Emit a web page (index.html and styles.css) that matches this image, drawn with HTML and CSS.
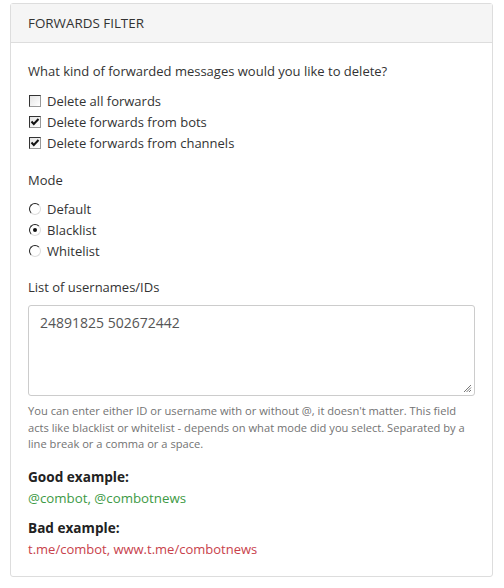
FILE: index.html
```html
<!DOCTYPE html>
<html>
<head>
<meta charset="utf-8">
<link rel="stylesheet" href="styles.css">
</head>
<body>
<div class="panel">
  <div class="panel-heading">FORWARDS FILTER</div>
  <div class="panel-body">
    <div class="question">What kind of forwarded messages would you like to delete?</div>
    <div class="options">
      <label class="opt"><span class="cb"></span>Delete all forwards</label>
      <label class="opt"><span class="cb checked"><svg viewBox="0 0 12 12" width="12" height="12"><path d="M2.5 5.5 L4.8 8 L9.5 3" fill="none" stroke="#111" stroke-width="2"/></svg></span>Delete forwards from bots</label>
      <label class="opt"><span class="cb checked"><svg viewBox="0 0 12 12" width="12" height="12"><path d="M2.5 5.5 L4.8 8 L9.5 3" fill="none" stroke="#111" stroke-width="2"/></svg></span>Delete forwards from channels</label>
    </div>
    <div class="label mode">Mode</div>
    <div class="options">
      <label class="opt"><span class="rd"></span>Default</label>
      <label class="opt"><span class="rd on"></span>Blacklist</label>
      <label class="opt"><span class="rd"></span>Whitelist</label>
    </div>
    <div class="label list">List of usernames/IDs</div>
    <div class="textarea">24891825 502672442<svg class="grip" viewBox="0 0 10 10" width="10" height="10"><path d="M9 2 L2 9 M9 4.5 L4.5 9 M9 7 L7 9" stroke="#777" stroke-width="1"/></svg></div>
    <p class="help">You can enter either ID or username with or without @, it doesn't matter. This field acts like blacklist or whitelist - depends on what mode did you select. Separated by a line break or a comma or a space.</p>
    <div class="ex-title">Good example:</div>
    <div class="good">@combot, @combotnews</div>
    <div class="ex-title bad-title">Bad example:</div>
    <div class="bad">t.me/combot, www.t.me/combotnews</div>
  </div>
</div>
</body>
</html>
```
FILE: styles.css
```css
* { box-sizing: border-box; }
body {
  margin: 0;
  background: #fff;
  font-family: "Open Sans", "Noto Sans", sans-serif;
  color: #333;
  font-size: 13px;
}
.panel {
  margin: 3px 12px 0 10px;
  width: 483px;
  border: 1px solid #ddd;
  border-radius: 3px;
  height: 574px;
}
.panel-heading {
  height: 39px;
  background: #f5f5f5;
  border-bottom: 1px solid #ddd;
  padding: 0 17px;
  line-height: 38px;
  font-size: 13.4px;
  color: #333;
}
.panel-body {
  padding: 19px 17px 0 17px;
}
.question {
  line-height: 18px;
  margin-bottom: 10px;
}
.options {
  display: flex;
  flex-direction: column;
}
.opt {
  display: flex;
  align-items: center;
  height: 21px;
  gap: 6px;
}
.cb {
  width: 12px;
  height: 12px;
  border: 1px solid #333;
  border-right-color: #999;
  border-bottom-color: #999;
  background: linear-gradient(135deg, #e4e4e4, #fff);
  position: relative;
  margin-left: 1px;
}
.cb svg { position: absolute; left: -1px; top: -1px; }
.rd {
  width: 12px;
  height: 12px;
  border-radius: 50%;
  border: 1px solid;
  border-color: #222 #ddd #ddd #222;
  background: #fff;
  margin-left: 1px;
  position: relative;
}
.rd.on::after {
  content: "";
  position: absolute;
  left: 3px; top: 3px;
  width: 4px; height: 4px;
  border-radius: 50%;
  background: #111;
}
.label { line-height: 18px; }
.mode { margin-top: 18px; margin-bottom: 9px; }
.list { margin-top: 17px; margin-bottom: 9px; }
.textarea {
  position: relative;
  height: 91px;
  border: 1px solid #ccc;
  border-radius: 3px;
  padding: 8px 11px;
  font-size: 14px;
  line-height: 18px;
  color: #555;
}
.grip { position: absolute; right: 2px; bottom: 2px; }
.help {
  margin: 7px 0 0;
  font-size: 11.15px;
  line-height: 16.5px;
  color: #737373;
}
.ex-title {
  font-weight: bold;
  margin-top: 15px;
  line-height: 18px;
  font-size: 13.6px;
  color: #222;
}
.bad-title { margin-top: 12px; }
.good, .bad { line-height: 18px; margin-top: 3px; }
.good { color: #3d9a45; font-size: 13.3px; }
.bad { color: #c8414b; }
```
